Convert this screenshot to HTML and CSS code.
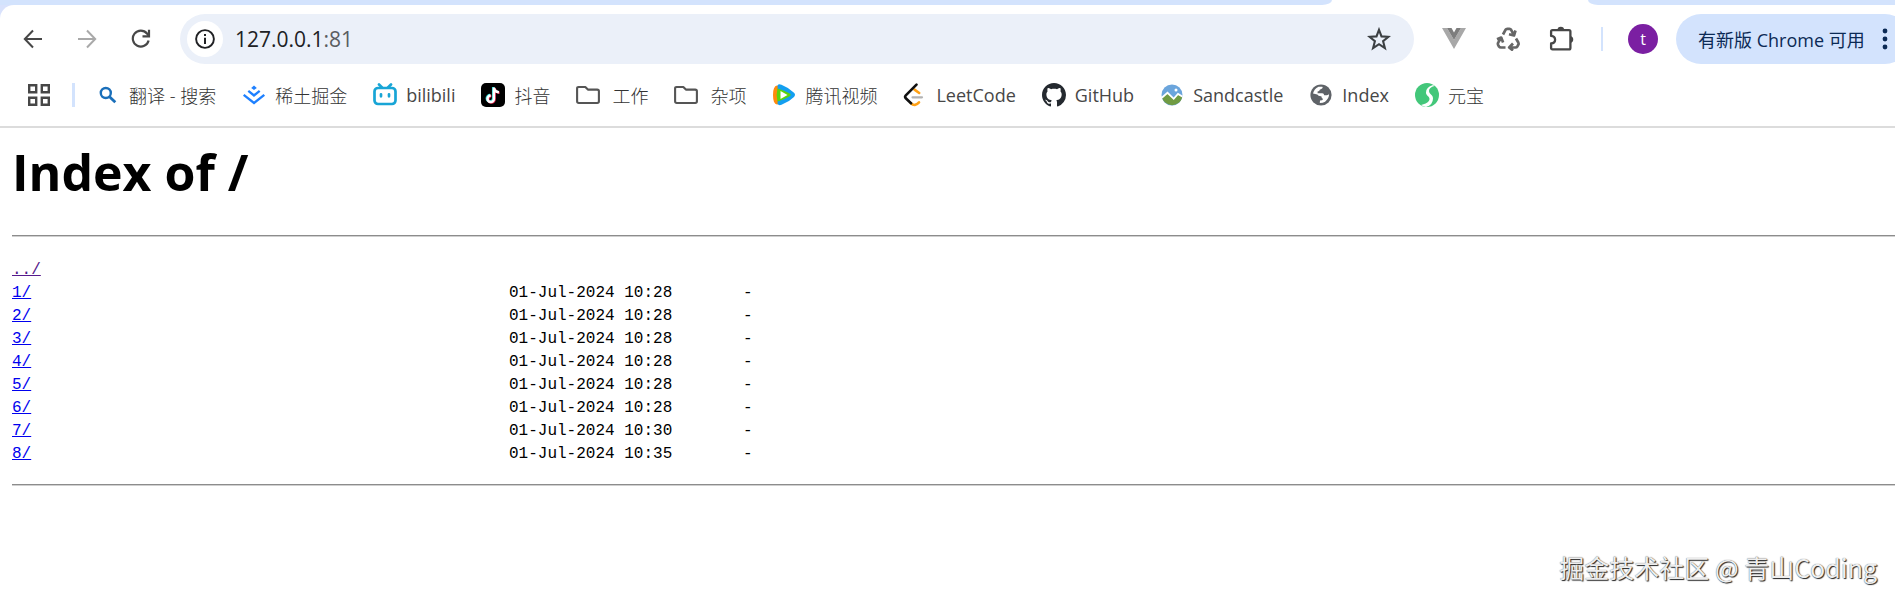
FILE: index.html
```html
<!doctype html>
<html lang="zh-CN">
    <head>
        <meta charset="utf-8">
        <meta name="viewport" content="width=device-width, initial-scale=1">
        <title>Index of /</title>
        <link rel="stylesheet" href="styles.css">
    </head>
    <body>
        <header class="browser">
            <div class="tabs">
                <div class="tabs-left"></div>
                <div class="tabs-active"></div>
                <div class="tabs-right"></div>
            </div>
            <div class="toolbar">
                <button class="tool" aria-label="Back">
                    <svg width="20" height="20" viewBox="0 0 20 20" fill="none" stroke="#474747" stroke-width="2"><path d="M19 10H2M10 1.5 1.8 10l8.200 8.500"/></svg>
                </button>
                <button class="tool" aria-label="Forward" disabled>
                    <svg width="20" height="20" viewBox="0 0 20 20" fill="none" stroke="#a9a9a9" stroke-width="2"><path d="M1 10h17M10 1.500 18.200 10 10 18.500"/></svg>
                </button>
                <button class="tool" aria-label="Reload">
                    <svg width="20" height="20" viewBox="0 0 20 20" fill="none" stroke="#474747" stroke-width="2.200"><path d="M17.600 11.500A8 8 0 1 1 16 4.500l2 2.500"/><path d="M18 .8V7.300h-6.500"/></svg>
                </button>
                <form class="omnibox">
                    <button class="site-info" type="button" aria-label="Site information">
                        <svg width="20" height="20" viewBox="0 0 20 20"><circle cx="10" cy="10" r="8.900" fill="none" stroke="#202124" stroke-width="1.900"/><path d="M9 8.700h2V15H9zM9 5h2v2H9z" fill="#202124"/></svg>
                    </button>
                    <div class="url" role="textbox" aria-label="Address" tabindex="0">127.0.0.1<span class="port">:81</span></div>
                    <button class="star" type="button" aria-label="Bookmark this page">
                        <svg width="24" height="24" viewBox="0 0 24 24" fill="none" stroke="#3c4043" stroke-width="2.100"><path d="m12 2.800 2.500 6.600 7 .4-5.400 4.400 1.800 6.900-5.900-3.900-5.900 3.900 1.800-6.900L2.500 9.800l7-.4z"/></svg>
                    </button>
                </form>
                <button class="tool" aria-label="Vue.js devtools">
                    <svg width="24" height="22" viewBox="0 0 24 22"><path d="M0 0h5l7 12 7-12h5L12 21z" fill="#a8a8a8"/><path d="M5 0h4.500L12 4.500 14.500 0H19l-7 12z" fill="#7d7d7d"/></svg>
                </button>
                <button class="tool" aria-label="Recycle">
                    <svg width="24" height="24" viewBox="0 0 24 24" fill="none" stroke="#666" stroke-width="2.700" stroke-linejoin="round"><path d="m7 7.500 2.500-4.700q.6-1 1.800-1h2.200q1 0 1.600 1l2.800 5M19.500 3.500 18 8.500l-5-1.300M20 11.500l2.300 4q.6 1.200 0 2.200l-1 1.800q-.6 1-1.800 1H13.500M17 16.500l-3.800 4 3.800 3M9.500 20.500H5q-1.400 0-2-1l-.9-1.700q-.5-1 .1-2.200l2.400-4M1 12.300l4.200-1.700 1.900 4.800"/></svg>
                </button>
                <button class="tool" aria-label="Extensions">
                    <svg width="26" height="26" viewBox="0 0 26 26"><path d="M3.500 4.200h16.500q1.400 0 1.400 1.400V22q0 1.400-1.400 1.400H3.500q-1.400 0-1.400-1.400v-4.500q4-.5 4-3.800t-4-3.800V5.600q0-1.400 1.400-1.400z" fill="none" stroke="#474747" stroke-width="2.300" stroke-linejoin="round"/><path d="M8.500 4a3.300 3.300 0 0 1 6.600 0zM21.500 10a3.600 3.600 0 0 1 0 7z" fill="#474747"/></svg>
                </button>
                <span class="divider"></span>
                <button class="avatar" aria-label="Profile">t</button>
                <button class="update">
                    <span>有新版 Chrome 可用</span>
                    <svg width="6" height="22" viewBox="0 0 6 22" fill="#0b2a55"><circle cx="3" cy="3" r="2.400"/><circle cx="3" cy="11" r="2.400"/><circle cx="3" cy="19" r="2.400"/></svg>
                </button>
            </div>
            <nav class="bookmarks">
                <button class="apps" aria-label="Apps">
                    <svg width="22" height="22" viewBox="0 0 22 22" fill="none" stroke="#474747" stroke-width="2.400"><path d="M1.200 1.200h7v7h-7zM13.800 1.200h7v7h-7zM1.200 13.800h7v7h-7zM13.800 13.800h7v7h-7z"/></svg>
                </button>
                <span class="divider"></span>
                <a class="zh" href="#">
                    <svg width="24" height="24" viewBox="0 0 24 24" fill="none" stroke="#1a6fba" stroke-width="2.400"><circle cx="9.800" cy="10" r="5"/><path d="m13.500 13.700 5.800 5.600" stroke-width="2.800"/></svg>
                    翻译 - 搜索
                </a>
                <a class="zh" href="#">
                    <svg width="24" height="24" viewBox="0 0 24 24"><path d="m12 2.600 2.800 2.300L12 7.100 9.200 4.900z" fill="#1e80ff"/><path d="m6.300 7.800 5.700 4.600 5.700-4.600M1.700 11.800 12 20l10.300-8.200" fill="none" stroke="#1e80ff" stroke-width="2.300"/></svg>
                    稀土掘金
                </a>
                <a href="#">
                    <svg width="24" height="24" viewBox="0 0 24 24" fill="none" stroke="#18a5d6" stroke-width="2.700" stroke-linecap="round"><rect x="1.500" y="5" width="21" height="16" rx="3.500"/><path d="m6 1.500 3 3M18 1.500l-3 3M8 11.300v2M16 11.300v2"/></svg>
                    bilibili
                </a>
                <a class="zh" href="#">
                    <svg width="24" height="24" viewBox="0 0 24 24"><rect width="24" height="24" rx="5" fill="#000"/><g fill="none" stroke-width="2.500"><path d="M12.200 4v11.300a3.200 3.200 0 1 1-3.200-3.200M12.200 4.500q.8 4 5 4.300" stroke="#25d8d5"/><path d="M13.600 5v11.300a3.200 3.200 0 1 1-3.200-3.200M13.600 5.500q.8 4 5 4.300" stroke="#f12b56"/><path d="M12.900 4.500v11.300a3.200 3.200 0 1 1-3.200-3.200M12.900 5q.8 4 5 4.300" stroke="#fff"/></g></svg>
                    抖音
                </a>
                <a class="zh folder" href="#">
                    <svg width="24" height="24" viewBox="0 0 24 24" fill="none" stroke="#555" stroke-width="2.100" stroke-linejoin="round"><path d="M2.500 4h6.800l2.600 2.600h9.300q1.700 0 1.700 1.700v10q0 1.700-1.700 1.700H2.800q-1.700 0-1.700-1.700V5.400Q1.100 4 2.500 4z"/></svg>
                    工作
                </a>
                <a class="zh folder" href="#">
                    <svg width="24" height="24" viewBox="0 0 24 24" fill="none" stroke="#555" stroke-width="2.100" stroke-linejoin="round"><path d="M2.500 4h6.800l2.600 2.600h9.300q1.700 0 1.700 1.700v10q0 1.700-1.700 1.700H2.800q-1.700 0-1.700-1.700V5.400Q1.100 4 2.500 4z"/></svg>
                    杂项
                </a>
                <a class="zh" href="#">
                    <svg width="24" height="24" viewBox="0 0 24 24"><path d="M5 2.500Q1 3 1 12t4 9.500q2 .2 2-2V4.500q0-2-2-2z" fill="#ff8a0c"/><path d="M5.500 2.500q1-2 4-.7 7.500 3 12.500 8 2 2 0 4.200-5 5-12.500 7.800-3 1-4-1 1.500-9 0-18.300z" fill="#139ff0"/><path d="M5.500 5.600q7 2 12.500 5.200 1.600 1 0 2.200-5.500 3.600-12.500 5.400-1.800-6.400 0-12.800z" fill="#5bd40c"/><path d="m8.500 8 7 4-7 4z" fill="#fff"/></svg>
                    腾讯视频
                </a>
                <a href="#">
                    <svg width="24" height="24" viewBox="0 0 24 24" fill="none" stroke-linecap="round" stroke-width="2.600"><path d="M9.500 14.300h9.500" stroke="#b3b3b3" stroke-width="2.200"/><path d="m11.500 6.600 4.700 3.400M8 20.300q3.800 3.700 8-1" stroke="#ffa116"/><path d="M13.500 1.600 2.800 12.300q-1.400 1.500 0 3L8 20.300" stroke="#111"/></svg>
                    LeetCode
                </a>
                <a href="#">
                    <svg width="24" height="24" viewBox="0 0 16 16" fill="#24292f"><path d="M8 0C3.580 0 0 3.580 0 8c0 3.540 2.290 6.530 5.470 7.590.4.070.55-.17.55-.38 0-.19-.01-.82-.01-1.490-2.010.37-2.530-.49-2.690-.94-.09-.23-.48-.94-.82-1.130-.28-.15-.68-.52-.01-.53.63-.01 1.080.58 1.230.82.72 1.210 1.870.87 2.330.66.07-.52.28-.87.51-1.070-1.780-.2-3.640-.89-3.640-3.950 0-.87.31-1.590.82-2.150-.08-.2-.36-1.020.08-2.120 0 0 .67-.21 2.200.82.64-.18 1.320-.27 2-.27s1.360.09 2 .27c1.530-1.040 2.200-.82 2.200-.82.44 1.100.16 1.920.08 2.120.51.56.82 1.270.82 2.150 0 3.070-1.870 3.750-3.650 3.950.29.25.54.73.54 1.480 0 1.070-.01 1.930-.01 2.200 0 .21.15.46.55.38A8.010 8.010 0 0 0 16 8c0-4.420-3.580-8-8-8z"/></svg>
                    GitHub
                </a>
                <a href="#">
                    <svg width="24" height="24" viewBox="0 0 24 24"><circle cx="12" cy="12" r="10.500" fill="#6ba5dc"/><path d="M2 14.500 7.500 10l6 5.500L18 11l4.200 3.500A10.500 10.500 0 0 1 2 14.500z" fill="#709b43"/><path d="M1.800 14.800 7.500 9.800l6.200 6L18 11l4.300 2.600" fill="none" stroke="#fff" stroke-width="1.800"/><circle cx="16" cy="7" r="1.500" fill="#fff"/></svg>
                    Sandcastle
                </a>
                <a href="#">
                    <svg width="24" height="24" viewBox="0 0 24 24"><circle cx="12" cy="12" r="10.600" fill="#5f6368"/><path d="M4 10.500q1-4.500 5.500-6.800h3.800q1 .8-.2 1.800l-2.300 1.300q-.3 1.800-2.200 1.800v1.700h4.700q1.700 0 1.900 2h2.600q2.200 0 2.300-1.700.2 4.700-4 8.200-2 1.300-5.300 1.300l.2-2.700q2.700 0 3.100-1.500-1.600-.3-1.800-2.700-3 .2-4-1.800z" fill="#fff"/></svg>
                    Index
                </a>
                <a class="zh" href="#">
                    <svg width="24" height="24" viewBox="0 0 24 24"><circle cx="12" cy="12" r="12" fill="#43c77a"/><path d="M18 2q-7 2-7 7.500c0 3.500 3.500 3.500 3.500 6.500 0 3-4 5-8.500 6q2 1.500 5 2 7-2 7-8.500c0-4-4-4.500-4-7.500 0-2.500 2-4 5.500-5z" fill="#fff"/></svg>
                    元宝
                </a>
            </nav>
        </header>
        <main class="page">
            <h1>Index of /</h1>
            <hr>
            <table class="listing" cellspacing="0" cellpadding="0">
                <tbody>
                    <tr><td class="name"><a class="visited" href="../">../</a></td><td class="date"></td><td></td></tr>
                    <tr><td class="name"><a href="1/">1/</a></td><td class="date">01-Jul-2024 10:28</td><td>-</td></tr>
                    <tr><td class="name"><a href="2/">2/</a></td><td class="date">01-Jul-2024 10:28</td><td>-</td></tr>
                    <tr><td class="name"><a href="3/">3/</a></td><td class="date">01-Jul-2024 10:28</td><td>-</td></tr>
                    <tr><td class="name"><a href="4/">4/</a></td><td class="date">01-Jul-2024 10:28</td><td>-</td></tr>
                    <tr><td class="name"><a href="5/">5/</a></td><td class="date">01-Jul-2024 10:28</td><td>-</td></tr>
                    <tr><td class="name"><a href="6/">6/</a></td><td class="date">01-Jul-2024 10:28</td><td>-</td></tr>
                    <tr><td class="name"><a href="7/">7/</a></td><td class="date">01-Jul-2024 10:30</td><td>-</td></tr>
                    <tr><td class="name"><a href="8/">8/</a></td><td class="date">01-Jul-2024 10:35</td><td>-</td></tr>
                </tbody>
            </table>
            <hr>
        </main>
        <div class="watermark">掘金技术社区 @ 青山Coding</div>
    </body>
</html>
```

FILE: styles.css
```css
html, body { min-height: 100%; }
body { margin: 0; background: #fff; color: #000; font-family: "Open Sans", "Noto Sans CJK SC", sans-serif; overflow-x: hidden; }
button { margin: 0; padding: 0; border: 0; background: transparent; font: inherit; color: inherit; }
svg { display: block; flex: none; }

/*Browser frame*/
.browser { background: #d9e2fc; border-bottom: 2px solid #dcdcdc; overflow: hidden; }
.tabs { display: flex; height: 5px; background: #fff; }
.tabs-left { flex: 1; background: #d3e3fd; border-bottom-right-radius: 10px 5px; }
.tabs-active { width: 256px; }
.tabs-right { width: 307px; background: #d3e3fd; border-bottom-left-radius: 10px 5px; }
.toolbar { display: flex; align-items: center; padding: 9px 0 0 6px; background: #fff; border-top-left-radius: 14px; }
.tool { width: 54px; height: 50px; display: flex; align-items: center; justify-content: center; }
.omnibox { flex: 1; display: flex; align-items: center; height: 50px; margin: 0 13px 0 12px; padding: 0 8px 0 7px; box-sizing: border-box; border-radius: 25px; background: #ebf0f9; }
.site-info { display: flex; align-items: center; justify-content: center; width: 36px; height: 36px; border-radius: 50%; background: #fff; }
.url { flex: 1; margin-left: 12px; font-size: 21px; color: #202124; }
.port { color: #5a5d61; }
.star { display: flex; align-items: center; justify-content: center; width: 54px; height: 50px; }
.divider { flex: none; width: 2px; height: 24px; background: #d3e3fd; }
.toolbar .divider { margin: 0 25px 0 12px; }
.avatar { width: 30px; height: 30px; border-radius: 50%; background: #7b1fa2; color: #fff; font-size: 16px; line-height: 30px; }
.update { display: flex; align-items: center; justify-content: space-between; box-sizing: border-box; width: 234px; height: 50px; margin: 0 -15px 0 18px; padding: 0 22px; border-radius: 25px; background: #d3e3fd; color: #0b2a55; font-size: 18px; white-space: nowrap; }

/*Bookmarks bar*/
.bookmarks { display: flex; align-items: center; gap: 26px; height: 62px; padding-left: 28px; background: #fff; }
.bookmarks .divider { width: 3px; margin: 0 -5px 0 -4px; }
.bookmarks a { display: flex; align-items: center; gap: 9px; color: #474747; font-size: 18px; text-decoration: none; white-space: nowrap; }
.bookmarks .zh { color: #333; font-weight: 300; }
.bookmarks .folder { gap: 12px; }

/*Directory listing*/
.page { padding-left: 12px; }
.page h1 { margin: 0; padding: 5px 0 24px; font-size: 50px; line-height: 78px; font-weight: bold; }
.page hr { margin: 0; border: 0; border-top: 1px solid #8c8c8c; border-bottom: 1px solid #d0d0d0; }
.listing { margin: 22px 0 18px; font-family: "Liberation Mono", monospace; font-size: 16px; line-height: 23px; }
.listing td { padding: 0; }
.listing .name { width: 497px; }
.listing .date { width: 234px; }
.listing a { color: #0000ee; }
.listing a.visited { color: #551a8b; }

.watermark { position: absolute; right: 18px; bottom: 19px; font-family: "Noto Sans CJK SC", sans-serif; font-size: 25px; line-height: 36px; color: #eee; text-shadow: 1px 1px 1px #222, 0 0 1px #555; }
```
